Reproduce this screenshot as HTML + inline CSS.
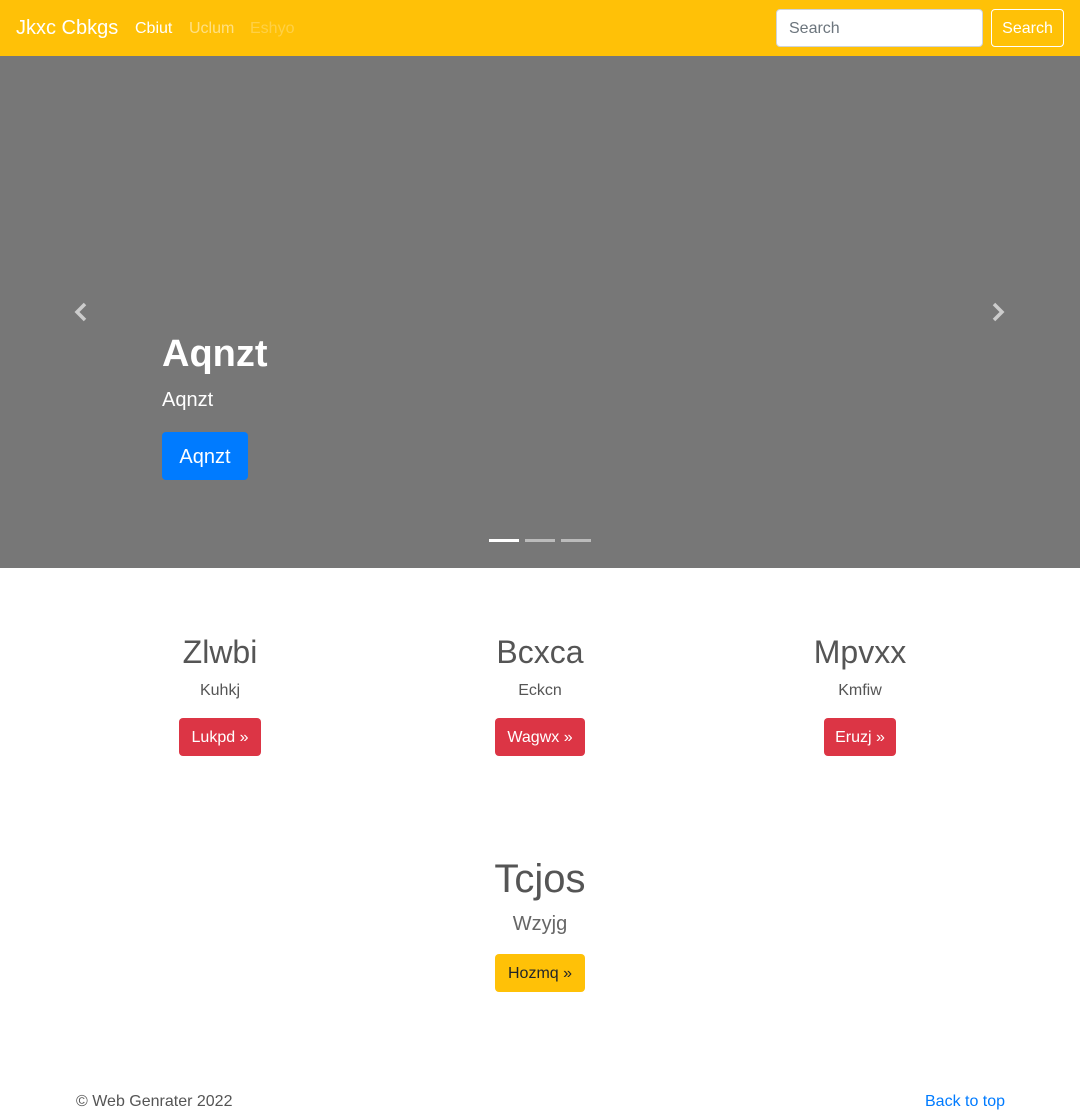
<!DOCTYPE html>
<html><head><meta charset="utf-8"><style>
*{box-sizing:border-box;margin:0;padding:0}
body{width:1080px;height:1112px;font-family:"Liberation Sans",sans-serif;color:#555;background:#fff;position:relative;overflow:hidden}
.nav{position:absolute;top:0;left:0;width:1080px;height:56px;background:#ffc107}
.abs{position:absolute;white-space:nowrap}
.car{position:absolute;top:56px;left:0;width:1080px;height:512px;background:#777}
.btn{position:absolute;border-radius:4px;color:#fff;text-align:center;font-size:16px}
</style></head><body>
<div class="nav">
<div class="abs" style="left:16px;top:17px;font-size:20px;color:#fff">Jkxc Cbkgs</div>
<div class="abs" style="left:135px;top:20px;font-size:16px;color:#fff">Cbiut</div>
<div class="abs" style="left:189px;top:20px;font-size:16px;color:rgba(255,255,255,.5)">Uclum</div>
<div class="abs" style="left:250px;top:20px;font-size:16px;color:rgba(255,255,255,.25)">Eshyo</div>
<div class="abs" style="left:776px;top:9px;width:207px;height:38px;background:#fff;border:1px solid #ced4da;border-radius:4px;font-size:16px;color:#6c757d;padding:10px 12px">Search</div>
<div class="abs" style="left:991px;top:9px;width:73px;height:38px;border:1px solid #fff;border-radius:4px;font-size:16px;color:#fff;text-align:center;padding-top:10px">Search</div>
</div>
<div class="car">
<svg class="abs" style="left:73px;top:246px" width="16" height="20" viewBox="0 0 16 20"><path d="M12 2 L4 10 L12 18" stroke="#ccc" stroke-width="3.5" fill="none"/></svg>
<svg class="abs" style="left:990px;top:246px" width="16" height="20" viewBox="0 0 16 20"><path d="M4 2 L12 10 L4 18" stroke="#ccc" stroke-width="3.5" fill="none"/></svg>
<div class="abs" style="left:162px;top:277px;font-size:38px;font-weight:bold;color:#fff">Aqnzt</div>
<div class="abs" style="left:162px;top:333px;font-size:20px;color:#fff">Aqnzt</div>
<div class="btn" style="left:162px;top:376px;width:86px;height:48px;background:#007bff;font-size:20px;padding-top:14px">Aqnzt</div>
<div class="abs" style="left:489px;top:483px;width:30px;height:3px;background:#fff"></div>
<div class="abs" style="left:525px;top:483px;width:30px;height:3px;background:rgba(255,255,255,.5)"></div>
<div class="abs" style="left:561px;top:483px;width:30px;height:3px;background:rgba(255,255,255,.5)"></div>
</div>
<div class="abs" style="left:60px;width:320px;top:634px;text-align:center;font-size:32px">Zlwbi</div>
<div class="abs" style="left:60px;width:320px;top:682px;text-align:center;font-size:16px">Kuhkj</div>
<div class="btn" style="left:179px;top:718px;width:82px;height:38px;background:#dc3545;padding-top:11px">Lukpd »</div>
<div class="abs" style="left:380px;width:320px;top:634px;text-align:center;font-size:32px">Bcxca</div>
<div class="abs" style="left:380px;width:320px;top:682px;text-align:center;font-size:16px">Eckcn</div>
<div class="btn" style="left:495px;top:718px;width:90px;height:38px;background:#dc3545;padding-top:11px">Wagwx »</div>
<div class="abs" style="left:700px;width:320px;top:634px;text-align:center;font-size:32px">Mpvxx</div>
<div class="abs" style="left:700px;width:320px;top:682px;text-align:center;font-size:16px">Kmfiw</div>
<div class="btn" style="left:824px;top:718px;width:72px;height:38px;background:#dc3545;padding-top:11px">Eruzj »</div>
<div class="abs" style="left:0;width:1080px;top:857px;text-align:center;font-size:40px">Tcjos</div>
<div class="abs" style="left:0;width:1080px;top:913px;text-align:center;font-size:20px;font-weight:300;color:#666">Wzyjg</div>
<div class="btn" style="left:495px;top:954px;width:90px;height:38px;background:#ffc107;color:#212529;padding-top:11px">Hozmq »</div>
<div class="abs" style="left:76px;top:1093px;font-size:16px">© Web Genrater 2022</div>
<div class="abs" style="left:925px;top:1093px;font-size:16px;color:#007bff">Back to top</div>
</body></html>
